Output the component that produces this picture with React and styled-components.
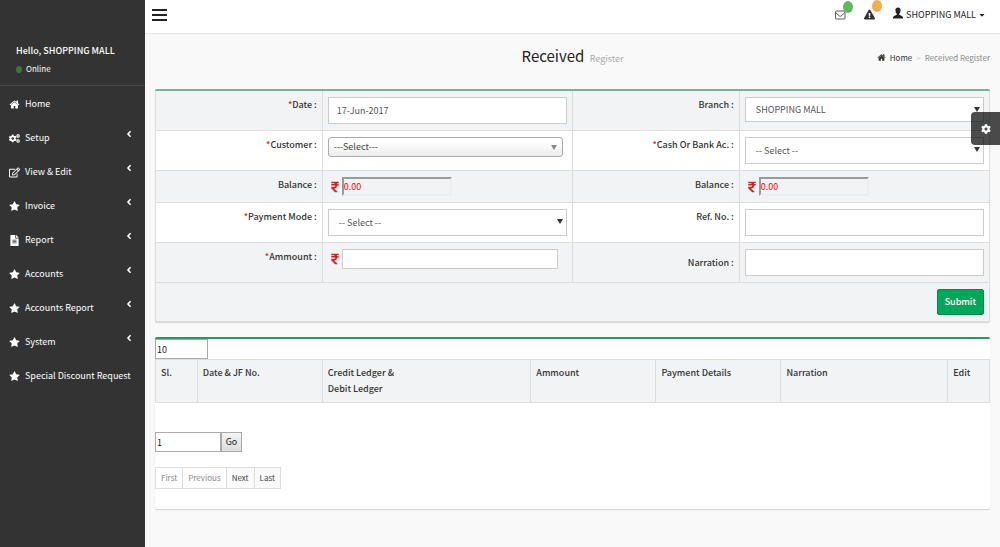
import React, { useState } from 'react';
import styled, { createGlobalStyle, css } from 'styled-components';
import {
  FaCogs,
  FaRegEdit,
  FaFileAlt,
  FaAngleLeft,
  FaExclamationTriangle,
  FaCaretDown,
  FaRupeeSign,
  FaCog,
} from 'react-icons/fa';

const GlobalStyle = createGlobalStyle`
  * {
    box-sizing: border-box;
  }

  body {
    margin: 0;
    background: #f9f9f9;
    color: #333;
    font-family: "Noto Sans CJK SC", "Noto Sans", sans-serif;
    font-size: 9px;
    line-height: 16px;
  }

  input, select, button {
    font-family: inherit;
    font-size: inherit;
    line-height: 16px;
  }

  a {
    color: inherit;
    text-decoration: none;
  }
`;

const Page = styled.div`
  display: flex;
  min-height: 100vh;
`;

/* Sidebar */

const Sidebar = styled.aside`
  flex: 0 0 145px;
  min-width: 0;
  background: #333;
  color: #fff;
`;

const UserPanel = styled.div`
  padding: 43px 16px 8px;
  border-bottom: 1px solid #484848;
`;

const Hello = styled.p`
  margin: 0 0 2px;
  font-weight: 500;
  white-space: nowrap;
`;

const Online = styled.a`
  display: flex;
  align-items: center;
  gap: 4px;
  font-size: 8px;

  &::before {
    content: '';
    width: 6px;
    height: 7px;
    border-radius: 50%;
    background: #3c763d;
  }
`;

const Menu = styled.ul`
  margin: 0;
  padding: 1px 0 0;
  list-style: none;
`;

const MenuLink = styled.a`
  display: flex;
  align-items: center;
  height: 34px;
  padding: 0 11px 0 9px;
  white-space: nowrap;

  > svg:first-child {
    width: 11px;
    height: 11px;
    margin-right: 5px;
  }

  > svg:last-child:not(:first-child) {
    margin: 0 0 8px auto;
  }
`;

/* Top bar */

const Main = styled.div`
  flex: 1;
  min-width: 0;
`;

const TopBar = styled.header`
  display: flex;
  justify-content: space-between;
  height: 34px;
  padding: 0 14px 0 7px;
  background: #fff;
  border-bottom: 1px solid #e6e6e6;
`;

const ToggleButton = styled.button`
  display: flex;
  flex-direction: column;
  gap: 3px;
  align-self: flex-start;
  margin: 9px 0 0;
  padding: 0;
  border: 0;
  background: none;

  span {
    width: 15px;
    height: 2px;
    background: #222;
  }
`;

const TopLinks = styled.nav`
  display: flex;
  align-items: center;
  height: 29px;
`;

const TopLink = styled.a`
  position: relative;
  display: flex;
  align-items: center;
  width: 29px;
`;

const Badge = styled.span`
  position: absolute;
  top: -9px;
  left: 8px;
  width: 10px;
  height: 12px;
  border-radius: 50%;
  background: ${props => props.$color};
`;

const UserMenu = styled.button`
  display: flex;
  align-items: center;
  gap: 2px;
  padding: 0;
  border: 0;
  background: none;
  color: #222;

  svg:first-child {
    margin: 0 1px 4px 0;
  }
`;

/* Heading row */

const Heading = styled.div`
  display: grid;
  grid-template-columns: 1fr auto 1fr;
  align-items: center;
  height: 55px;
  padding: 0 10px 8px;
`;

const Title = styled.h1`
  grid-column: 2;
  margin: 0;
  font-size: 15px;
  font-weight: 400;
  line-height: 24px;
  color: #222;

  small {
    margin-left: 2px;
    font-size: 9px;
    color: #aaa;
  }
`;

const Breadcrumb = styled.nav`
  display: flex;
  align-items: center;
  justify-content: flex-end;
  gap: 4px;
  font-size: 8px;
  color: #888;

  a {
    display: flex;
    align-items: center;
    gap: 4px;
    color: #333;
  }

  i {
    font-style: normal;
    color: #ccc;
  }
`;

/* Boxes */

const Box = styled.section`
  margin: 0 10px 15px;
  border-top: 2px solid ${props => props.$color};
  border-radius: 2px;
  background: #fff;
  box-shadow: 0 1px 1px rgba(0, 0, 0, 0.15);
`;

const FormGrid = styled.form`
  display: grid;
  grid-template-columns: 2fr 3fr 2fr 3fr;
  border-left: 1px solid #ddd;
`;

const cell = css`
  border-right: 1px solid #ddd;
  border-bottom: 1px solid #ddd;
  background: ${props => (props.$shaded ? '#f2f3f4' : '#fff')};
`;

const LabelCell = styled.div`
  ${cell}
  display: flex;
  justify-content: flex-end;
  align-items: ${props => (props.$middle ? 'center' : 'flex-start')};
  padding: 6px 5px;

  label {
    font-weight: 500;
  }

  span {
    color: #d22;
  }
`;

const FieldCell = styled.div`
  ${cell}
  display: flex;
  align-items: flex-start;
  padding: 6px 5px;
`;

const SubmitCell = styled.div`
  ${cell}
  grid-column: 1 / -1;
  display: flex;
  justify-content: flex-end;
  padding: 6px 5px;
`;

const TextInput = styled.input`
  width: 100%;
  height: 27px;
  padding: 0 8px;
  border: 1px solid #ccc;
  border-radius: 0;
  background: #fff;
  color: #555;
`;

const AmountInput = styled(TextInput)`
  width: 216px;
  height: 20px;
`;

const BalanceInput = styled.input`
  width: 110px;
  height: 19px;
  padding: 0;
  border: 2px inset #eee;
  background: #f2f3f4;
  color: #f00;
`;

const Rupee = styled(FaRupeeSign)`
  flex: none;
  width: 8px;
  height: 12px;
  margin: 4px 3px 0;
  color: #c22;
`;

const SelectWrap = styled.div`
  position: relative;
  width: 100%;

  &::after {
    content: '';
    position: absolute;
    top: 10px;
    right: 4px;
    border: 3px solid transparent;
    border-top: 5px solid #333;
    border-bottom: 0;
    pointer-events: none;
  }
`;

const SelectInput = styled.select`
  display: block;
  width: 100%;
  height: ${props => props.$height || 27}px;
  padding: 0 10px;
  border: 1px solid #ccc;
  border-radius: 0;
  appearance: none;
  background: #fff;
  color: #555;
`;

const ChosenWrap = styled(SelectWrap)`
  margin-right: 4px;

  &::after {
    top: 8px;
    right: 6px;
    border-top-color: #888;
  }
`;

const ChosenSelect = styled(SelectInput)`
  height: 20px;
  padding: 0 5px;
  border-color: #aaa;
  border-radius: 3px;
  background: linear-gradient(#fff 20%, #eee 90%);
  color: #444;
`;

const SubmitButton = styled.button`
  height: 26px;
  padding: 0 7px;
  border: 1px solid #008d4c;
  border-radius: 2px;
  background: #00a65a;
  color: #fff;
  font-weight: 500;
`;

/* Register list */

const SmallInput = styled.input`
  display: block;
  width: ${props => props.$width}px;
  height: 20px;
  padding: 0 1px;
  border: 1px solid #aaa;
  background: #fff;
  color: #222;
`;

const ListTable = styled.table`
  width: 100%;
  border-collapse: collapse;
  table-layout: fixed;

  th {
    height: 43px;
    padding: 5px;
    border: 1px solid #ddd;
    background: #f2f3f4;
    font-weight: 500;
    text-align: left;
    vertical-align: top;
  }
`;

const PageJump = styled.form`
  display: flex;
  margin-top: 29px;
`;

const GoButton = styled.button`
  width: 21px;
  height: 20px;
  padding: 0;
  border: 1px solid #aaa;
  background: linear-gradient(#f4f4f4, #ddd);
  color: #222;
`;

const Pagination = styled.div`
  display: flex;
  padding: 15px 0 20px;
`;

const PageButton = styled.button`
  height: 22px;
  padding: 0 5px;
  border: 1px solid #ddd;
  background: ${props => (props.disabled ? '#fff' : '#fafafa')};
  color: ${props => (props.disabled ? '#888' : '#444')};
  font-size: 8px;

  & + & {
    margin-left: -1px;
  }
`;

const SettingsButton = styled.button`
  position: fixed;
  top: 112px;
  right: 0;
  display: flex;
  align-items: center;
  justify-content: center;
  width: 29px;
  height: 33px;
  padding: 0;
  border: 0;
  border-radius: 4px 0 0 4px;
  background: rgba(0, 0, 0, 0.7);
  color: #fff;
`;

const HomeIcon = ({ size }) => (
  <svg width={size} height={size} viewBox="0 0 1792 1792" fill="currentColor">
    <path d="M1472 992v480q0 26-19 45t-45 19h-384v-384h-256v384h-384q-26 0-45-19t-19-45v-480q0-1 .5-3t.5-3l575-474 575 474q1 2 1 6zm223-69l-62 74q-8 9-21 11h-3q-13 0-21-7l-692-577-692 577q-12 8-24 7-13-2-21-11l-62-74q-8-10-7-23.5t11-21.5l719-599q32-26 76-26t76 26l244 204v-195q0-14 9-23t23-9h192q14 0 23 9t9 23v408l219 182q10 8 11 21.5t-7 23.5z" />
  </svg>
);

const StarIcon = () => (
  <svg viewBox="0 0 1792 1792" fill="currentColor">
    <path d="M1728 647q0 22-26 48l-363 354 86 500q1 7 1 20 0 21-10.5 35.5t-30.5 14.5q-19 0-40-12l-449-236-449 236q-22 12-40 12-21 0-31.5-14.5t-10.5-35.5q0-6 2-20l86-500-364-354q-25-27-25-48 0-37 56-46l502-73 225-455q19-41 49-41t49 41l225 455 502 73q56 9 56 46z" />
  </svg>
);

const EnvelopeIcon = () => (
  <svg width="11" height="10" viewBox="0 0 22 20" fill="none" stroke="currentColor" strokeWidth="1.600">
    <rect x="1" y="2" width="19" height="16" rx="1.500" />
    <path d="M1.500 5.500l7 6.200c1.300 1.100 2.700 1.100 4 0l7-6.200" />
  </svg>
);

const UserIcon = () => (
  <svg width="10" height="12" viewBox="0 0 20 24" fill="currentColor">
    <path d="M10 1c3.200 0 5.200 2.200 5.200 5.400 0 2.600-1 5.400-2.700 6.900v2.200l5.300 2.700c1.400.7 2.200 1.700 2.200 3V23H0v-1.800c0-1.300.8-2.300 2.200-3l5.300-2.700v-2.200C5.800 11.800 4.800 9 4.800 6.400 4.800 3.200 6.800 1 10 1z" />
  </svg>
);

const menuItems = [
  { label: 'Home', icon: HomeIcon },
  { label: 'Setup', icon: FaCogs, children: true },
  { label: 'View & Edit', icon: FaRegEdit, children: true },
  { label: 'Invoice', icon: StarIcon, children: true },
  { label: 'Report', icon: FaFileAlt, children: true },
  { label: 'Accounts', icon: StarIcon, children: true },
  { label: 'Accounts Report', icon: StarIcon, children: true },
  { label: 'System', icon: StarIcon, children: true },
  { label: 'Special Discount Request', icon: StarIcon },
];

const columns = [
  { label: 'Sl.', width: '5%' },
  { label: 'Date & JF No.', width: '15%' },
  { label: <>Credit Ledger &<br />Debit Ledger</>, width: '25%' },
  { label: 'Ammount', width: '15%' },
  { label: 'Payment Details', width: '15%' },
  { label: 'Narration', width: '20%' },
  { label: 'Edit', width: '5%' },
];

const FormLabel = ({ htmlFor, required, shaded, middle, children }) => (
  <LabelCell $shaded={shaded} $middle={middle}>
    <label htmlFor={htmlFor}>
      {required && <span>*</span>}
      {children} :
    </label>
  </LabelCell>
);

const App = () => {
  const [date, setDate] = useState('17-Jun-2017');
  const [pageSize, setPageSize] = useState('10');
  const [page, setPage] = useState('1');

  return (
    <>
      <GlobalStyle />
      <Page>
        <Sidebar>
          <UserPanel>
            <Hello>Hello, SHOPPING MALL</Hello>
            <Online href="#">Online</Online>
          </UserPanel>
          <Menu>
            {menuItems.map(({ label, icon: Icon, children }) => (
              <li key={label}>
                <MenuLink href="#">
                  <Icon />
                  <span>{label}</span>
                  {children && <FaAngleLeft size={10} />}
                </MenuLink>
              </li>
            ))}
          </Menu>
        </Sidebar>

        <Main>
          <TopBar>
            <ToggleButton type="button" aria-label="Toggle navigation">
              <span />
              <span />
              <span />
            </ToggleButton>
            <TopLinks>
              <TopLink href="#" aria-label="Messages">
                <EnvelopeIcon />
                <Badge $color="#5cb85c" />
              </TopLink>
              <TopLink href="#" aria-label="Alerts">
                <FaExclamationTriangle size={11} />
                <Badge $color="#f0ad4e" />
              </TopLink>
              <UserMenu type="button">
                <UserIcon />
                <span>SHOPPING MALL</span>
                <FaCaretDown size={8} />
              </UserMenu>
            </TopLinks>
          </TopBar>

          <Heading>
            <Title>
              Received <small>Register</small>
            </Title>
            <Breadcrumb>
              <a href="#">
                <HomeIcon size={9} />
                Home
              </a>
              <i>&gt;</i>
              <span>Received Register</span>
            </Breadcrumb>
          </Heading>

          <Box $color="#6fb596">
            <FormGrid onSubmit={e => e.preventDefault()}>
              <FormLabel htmlFor="date" required shaded>Date</FormLabel>
              <FieldCell $shaded>
                <TextInput id="date" value={date} onChange={e => setDate(e.target.value)} />
              </FieldCell>
              <FormLabel htmlFor="branch" shaded>Branch</FormLabel>
              <FieldCell $shaded>
                <SelectWrap>
                  <SelectInput id="branch" $height={25}>
                    <option>SHOPPING MALL</option>
                  </SelectInput>
                </SelectWrap>
              </FieldCell>

              <FormLabel htmlFor="customer" required>Customer</FormLabel>
              <FieldCell>
                <ChosenWrap>
                  <ChosenSelect id="customer">
                    <option>---Select---</option>
                  </ChosenSelect>
                </ChosenWrap>
              </FieldCell>
              <FormLabel htmlFor="account" required>Cash Or Bank Ac.</FormLabel>
              <FieldCell>
                <SelectWrap>
                  <SelectInput id="account">
                    <option>-- Select --</option>
                  </SelectInput>
                </SelectWrap>
              </FieldCell>

              <FormLabel htmlFor="customerBalance" shaded>Balance</FormLabel>
              <FieldCell $shaded>
                <Rupee />
                <BalanceInput id="customerBalance" value="0.00" readOnly />
              </FieldCell>
              <FormLabel htmlFor="accountBalance" shaded>Balance</FormLabel>
              <FieldCell $shaded>
                <Rupee />
                <BalanceInput id="accountBalance" value="0.00" readOnly />
              </FieldCell>

              <FormLabel htmlFor="paymentMode" required>Payment Mode</FormLabel>
              <FieldCell>
                <SelectWrap>
                  <SelectInput id="paymentMode">
                    <option>-- Select --</option>
                  </SelectInput>
                </SelectWrap>
              </FieldCell>
              <FormLabel htmlFor="refNo">Ref. No.</FormLabel>
              <FieldCell>
                <TextInput id="refNo" />
              </FieldCell>

              <FormLabel htmlFor="amount" required shaded>Ammount</FormLabel>
              <FieldCell $shaded>
                <Rupee />
                <AmountInput id="amount" />
              </FieldCell>
              <FormLabel htmlFor="narration" shaded middle>Narration</FormLabel>
              <FieldCell $shaded>
                <TextInput id="narration" />
              </FieldCell>

              <SubmitCell $shaded>
                <SubmitButton type="submit">Submit</SubmitButton>
              </SubmitCell>
            </FormGrid>
          </Box>

          <Box $color="#1f9d5f">
            <SmallInput
              aria-label="Rows per page"
              $width={53}
              value={pageSize}
              onChange={e => setPageSize(e.target.value)}
            />
            <ListTable>
              <colgroup>
                {columns.map((column, i) => (
                  <col key={i} width={column.width} />
                ))}
              </colgroup>
              <thead>
                <tr>
                  {columns.map((column, i) => (
                    <th key={i} scope="col">{column.label}</th>
                  ))}
                </tr>
              </thead>
            </ListTable>
            <PageJump onSubmit={e => e.preventDefault()}>
              <SmallInput
                aria-label="Page number"
                $width={66}
                value={page}
                onChange={e => setPage(e.target.value)}
              />
              <GoButton type="submit">Go</GoButton>
            </PageJump>
            <Pagination>
              <PageButton type="button" disabled>First</PageButton>
              <PageButton type="button" disabled>Previous</PageButton>
              <PageButton type="button">Next</PageButton>
              <PageButton type="button">Last</PageButton>
            </Pagination>
          </Box>
        </Main>
      </Page>
      <SettingsButton type="button" aria-label="Settings">
        <FaCog size={10} />
      </SettingsButton>
    </>
  );
};

export default App;
